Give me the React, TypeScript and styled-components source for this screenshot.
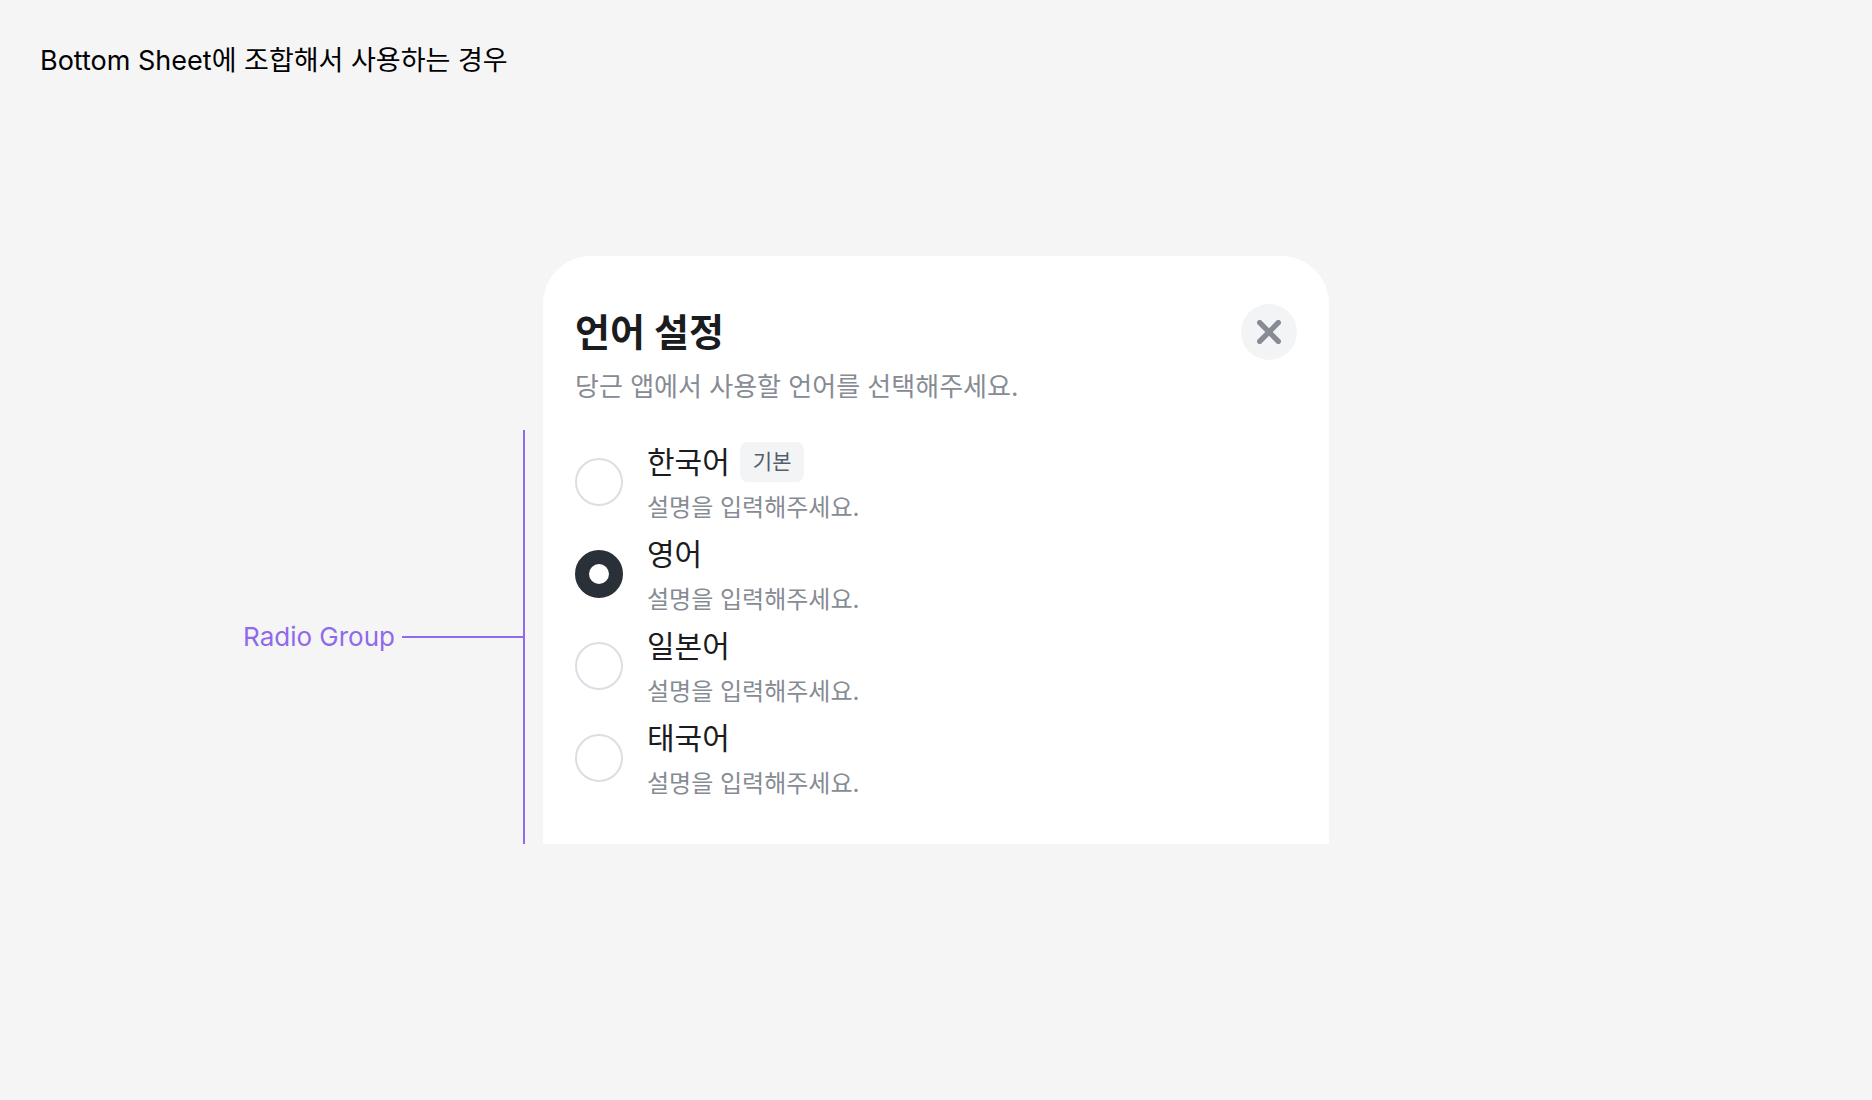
import React, { useState } from "react";
import styled, { createGlobalStyle } from "styled-components";

const color = {
  page: "#f5f5f5",
  sheet: "#ffffff",
  text: "#1a1c20",
  subtle: "#868b94",
  badgeText: "#555d6d",
  neutral: "#f3f4f5",
  stroke: "#dcdee3",
  control: "#2a3038",
  guide: "#8f6aea",
};

const GlobalStyle = createGlobalStyle`
  *, *::before, *::after { box-sizing: border-box; }
  body {
    margin: 0;
    background: ${color.page};
    color: ${color.text};
    font-family: Inter, "Noto Sans CJK KR", sans-serif;
  }
`;

const Page = styled.main`
  min-height: 100vh;
  padding: 40px 0;
`;

const Caption = styled.h1`
  margin: 0 0 174px;
  padding: 0 40px;
  color: #000;
  font-size: 27px;
  font-weight: 400;
  line-height: 42px;
`;

const Stage = styled.div`
  display: grid;
  grid-template-columns: 1fr minmax(0, 786px) 1fr;
`;

const Annotation = styled.div`
  display: flex;
  justify-content: flex-end;
  align-items: center;
  gap: 7px;
  margin-top: 174px;
  margin-right: 18px;
  border-right: 2px solid ${color.guide};
  color: ${color.guide};
  font-size: 26px;
  line-height: 32px;
  white-space: nowrap;
`;

const Leader = styled.span`
  width: 121px;
  height: 2px;
  background: ${color.guide};
`;

const Sheet = styled.section`
  padding: 48px 32px 40px;
  border-radius: 48px 48px 0 0;
  background: ${color.sheet};
`;

const SheetHeader = styled.header`
  display: flex;
  justify-content: space-between;
  align-items: center;
`;

const Title = styled.h2`
  margin: 0;
  font-size: 38px;
  font-weight: 700;
  line-height: 54px;
`;

const CloseButton = styled.button`
  display: grid;
  place-items: center;
  width: 56px;
  height: 56px;
  padding: 0;
  border: 0;
  border-radius: 50%;
  background: ${color.neutral};
  color: ${color.subtle};
  cursor: pointer;
`;

const Description = styled.p`
  margin: 4px 0 26px;
  color: ${color.subtle};
  font-size: 26px;
  line-height: 46px;
`;

const RadioGroup = styled.fieldset`
  margin: 0;
  padding: 0;
  border: 0;
`;

const Item = styled.label`
  display: flex;
  align-items: flex-start;
  gap: 24px;
  padding-top: 4px;
  cursor: pointer;
`;

const Radio = styled.input`
  flex: none;
  appearance: none;
  width: 48px;
  height: 48px;
  margin: 18px 0 0;
  border: 2px solid ${color.stroke};
  border-radius: 50%;
  background: ${color.sheet};
  cursor: pointer;

  &:checked {
    border: 14px solid ${color.control};
  }
`;

const ItemBody = styled.span`
  display: flex;
  flex-direction: column;
  gap: 4px;
`;

const ItemLabel = styled.span`
  display: flex;
  align-items: center;
  gap: 10px;
  font-size: 30px;
  line-height: 44px;
`;

const Badge = styled.span`
  padding: 0 13px;
  border-radius: 8px;
  background: ${color.neutral};
  color: ${color.badgeText};
  font-size: 21px;
  font-weight: 400;
  line-height: 40px;
`;

const ItemHint = styled.span`
  color: ${color.subtle};
  font-size: 24px;
  line-height: 40px;
`;

const languages = [
  { id: "ko", label: "한국어", badge: "기본" },
  { id: "en", label: "영어" },
  { id: "ja", label: "일본어" },
  { id: "th", label: "태국어" },
];

export default function App() {
  const [selected, setSelected] = useState("en");

  return (
    <>
      <GlobalStyle />
      <Page lang="ko">
        <Caption>Bottom Sheet에 조합해서 사용하는 경우</Caption>
        <Stage>
          <Annotation>
            Radio Group
            <Leader />
          </Annotation>
          <Sheet aria-labelledby="sheet-title">
            <SheetHeader>
              <Title id="sheet-title">언어 설정</Title>
              <CloseButton type="button" aria-label="닫기">
                <svg width="24" height="24" viewBox="0 0 24 24" fill="none" aria-hidden="true">
                  <path d="M2.7 2.7L21.3 21.3M21.3 2.7L2.7 21.3" stroke="currentColor" strokeWidth="5.4" strokeLinecap="round" />
                </svg>
              </CloseButton>
            </SheetHeader>
            <Description>당근 앱에서 사용할 언어를 선택해주세요.</Description>
            <RadioGroup aria-labelledby="sheet-title">
              {languages.map(({ id, label, badge }) => (
                <Item key={id}>
                  <Radio
                    type="radio"
                    name="language"
                    value={id}
                    checked={selected === id}
                    onChange={() => setSelected(id)}
                  />
                  <ItemBody>
                    <ItemLabel>
                      {label}
                      {badge && <Badge>{badge}</Badge>}
                    </ItemLabel>
                    <ItemHint>설명을 입력해주세요.</ItemHint>
                  </ItemBody>
                </Item>
              ))}
            </RadioGroup>
          </Sheet>
        </Stage>
      </Page>
    </>
  );
}
